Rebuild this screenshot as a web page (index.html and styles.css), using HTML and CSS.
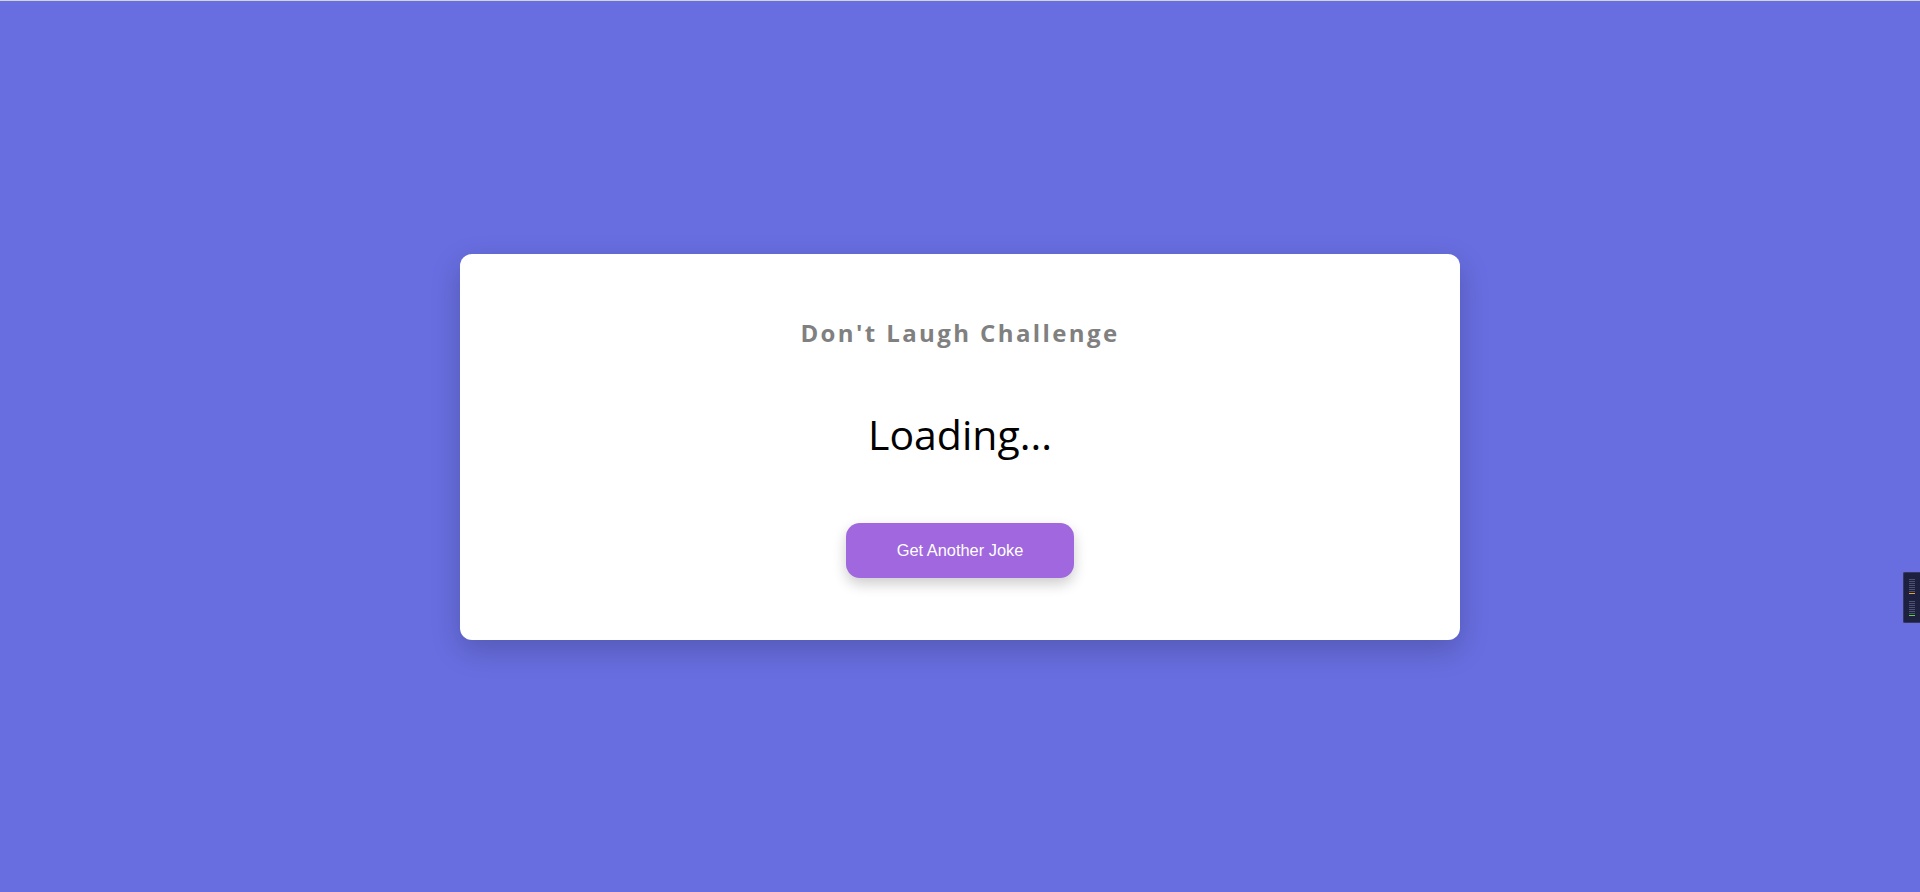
FILE: index.html
```html
<!DOCTYPE html>
<html lang="en">
<head>
<meta charset="utf-8">
<title>Don't Laugh Challenge</title>
<link rel="stylesheet" href="styles.css">
</head>
<body>
<main class="page">
  <section class="card">
    <h1 class="title">Don't Laugh Challenge</h1>
    <p class="joke">Loading...</p>
    <button class="btn" type="button">Get Another Joke</button>
  </section>
</main>
<div class="meter">
  <div class="meter-group">
    <span class="tick"></span><span class="tick"></span><span class="tick"></span><span class="tick"></span><span class="tick"></span><span class="tick"></span><span class="tick"></span><span class="tick orange"></span>
  </div>
  <div class="meter-group">
    <span class="tick"></span><span class="tick"></span><span class="tick"></span><span class="tick"></span><span class="tick"></span><span class="tick"></span><span class="tick"></span><span class="tick green"></span>
  </div>
</div>
</body>
</html>
```
FILE: styles.css
```css
html, body {
  margin: 0;
  padding: 0;
}
body {
  background: #686ee0;
  border-top: 1px solid #d4d4d4;
  font-family: "Open Sans", "Noto Sans", sans-serif;
  min-height: 891px;
  box-sizing: border-box;
}
.page {
  min-height: 891px;
  display: flex;
  align-items: center;
  justify-content: center;
}
.card {
  width: 1000px;
  box-sizing: border-box;
  background: #ffffff;
  border-radius: 12px;
  box-shadow: 0 10px 30px rgba(0, 0, 0, 0.2);
  padding: 63px 40px 62px;
  display: flex;
  flex-direction: column;
  align-items: center;
  text-align: center;
}
.title {
  margin: 0;
  font-size: 24px;
  line-height: 32px;
  font-weight: 700;
  letter-spacing: 2.4px;
  color: #808080;
}
.joke {
  margin: 61px 0 0;
  font-size: 41px;
  line-height: 48px;
  color: #000000;
}
.btn {
  margin-top: 65px;
  width: 228px;
  height: 55px;
  border: none;
  border-radius: 14px;
  background: #a067de;
  color: #ffffff;
  font-family: "Liberation Sans", Arial, sans-serif;
  font-size: 16.4px;
  box-shadow: 0 6px 14px rgba(0, 0, 0, 0.2);
  cursor: pointer;
}
.meter {
  position: fixed;
  right: 0;
  top: 572px;
  width: 17px;
  height: 51px;
  background: #1e2040;
  border: 1px solid #34375e;
  border-right: none;
  border-radius: 2px 0 0 2px;
  box-sizing: border-box;
  padding: 6px 0 0 5px;
  display: flex;
  flex-direction: column;
  gap: 7px;
}
.meter-group {
  display: flex;
  flex-direction: column;
  gap: 1px;
}
.tick {
  display: block;
  width: 6px;
  height: 1px;
  background: #4e5270;
}
.tick.orange {
  background: #f0a030;
}
.tick.green {
  background: #5fd33a;
}
```
